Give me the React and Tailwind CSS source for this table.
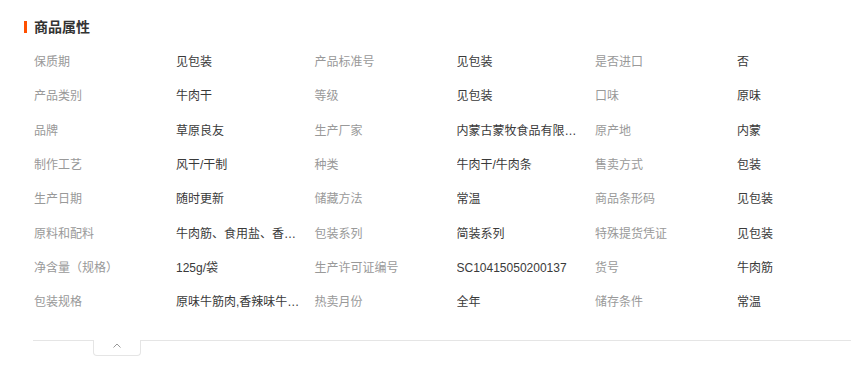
const rows = [
  ["保质期", "见包装", "产品标准号", "见包装", "是否进口", "否"],
  ["产品类别", "牛肉干", "等级", "见包装", "口味", "原味"],
  ["品牌", "草原良友", "生产厂家", "内蒙古蒙牧食品有限公司", "原产地", "内蒙"],
  ["制作工艺", "风干/干制", "种类", "牛肉干/牛肉条", "售卖方式", "包装"],
  ["生产日期", "随时更新", "储藏方法", "常温", "商品条形码", "见包装"],
  ["原料和配料", "牛肉筋、食用盐、香料、白砂糖", "包装系列", "简装系列", "特殊提货凭证", "见包装"],
  ["净含量（规格）", "125g/袋", "生产许可证编号", "SC10415050200137", "货号", "牛肉筋"],
  ["包装规格", "原味牛筋肉,香辣味牛筋肉", "热卖月份", "全年", "储存条件", "常温"],
];

function AttrRow({ cells }) {
  return (
    <div className="flex h-[34.3px] items-center text-[12px] leading-[16px]">
      {cells.map((text, i) =>
        i % 2 === 0 ? (
          <div key={i} className="w-[142px] shrink-0 text-[#999]">
            {text}
          </div>
        ) : (
          <div key={i} className="w-[138.5px] shrink-0 pr-[12px]">
            <div className="truncate text-[#3a3a3a]">{text}</div>
          </div>
        )
      )}
    </div>
  );
}

export default function App() {
  return (
    <div
      className="w-full overflow-hidden bg-white"
      style={{ fontFamily: '"Liberation Sans", "Noto Sans CJK SC", sans-serif' }}
    >
      <div className="pt-[20px] pl-[24px]">
        {/* title */}
        <div className="flex items-center h-[14px]">
          <div className="w-[3px] h-[12px] bg-[#ff5000]" />
          <div className="ml-[7px] text-[14px] leading-[14px] font-bold text-[#333]">商品属性</div>
        </div>

        {/* attributes */}
        <div className="mt-[11px] pl-[10px] w-[900px]">
          {rows.map((r, i) => (
            <AttrRow key={i} cells={r} />
          ))}
        </div>
      </div>

      {/* footer line with collapse tab */}
      <div className="mt-[21px] ml-[33px] border-t border-[#e5e5e5] h-[26px]">
        <div className="ml-[60px] -mt-px w-[48px] h-[16px] bg-white border border-t-0 border-[#e5e5e5] rounded-b-[4px] flex justify-center pt-[3px]">
          <svg width="8" height="5" viewBox="0 0 8 5" fill="none">
            <polyline points="0.5,4.5 4,1 7.5,4.5" stroke="#999" strokeWidth="1" />
          </svg>
        </div>
      </div>
    </div>
  );
}
